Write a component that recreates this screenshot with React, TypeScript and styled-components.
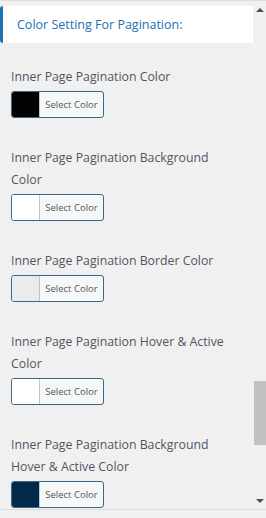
import React from "react";
import styled, { createGlobalStyle } from "styled-components";

const GlobalStyle = createGlobalStyle`
  html, body {
    margin: 0;
    padding: 0;
    background: #f0f0f1;
  }
  body {
    font-family: "Open Sans", "Noto Sans", sans-serif;
  }
`;

type ColorOption = {
  label: string;
  swatch: string;
};

const OPTIONS: ColorOption[] = [
  { label: "Inner Page Pagination Color", swatch: "#030303" },
  { label: "Inner Page Pagination Background Color", swatch: "#ffffff" },
  { label: "Inner Page Pagination Border Color", swatch: "#ebebeb" },
  { label: "Inner Page Pagination Hover & Active Color", swatch: "#ffffff" },
  { label: "Inner Page Pagination Background Hover & Active Color", swatch: "#012a4a" },
];

const Screen = styled.div`
  width: 266px;
  height: 518px;
  display: flex;
  flex-direction: column;
  border-top: 1px solid #e2ded6;
  box-sizing: border-box;
  overflow: hidden;
`;

const Frame = styled.div`
  height: 508px;
  display: flex;
  flex-direction: row;
  border-bottom: 1px solid #dcdcde;
  overflow: hidden;
`;

const Content = styled.div`
  width: 253px;
  display: flex;
  flex-direction: column;
  padding-top: 5px;
`;

const Heading = styled.div`
  height: 37px;
  background: #fff;
  border-left: 3px solid #2271b1;
  border-radius: 3px 0 0 3px;
  display: flex;
  align-items: center;
  padding-left: 14px;
  font-size: 12.5px;
  color: #2271b1;
`;

const Fields = styled.div`
  display: flex;
  flex-direction: column;
  gap: 29px;
  padding: 23px 0 0 11px;
`;

const Field = styled.div`
  display: flex;
  flex-direction: column;
  gap: 3px;
`;

const Label = styled.div`
  font-size: 12.3px;
  line-height: 22px;
  color: #50575e;
  width: 228px;
`;

const ColorButton = styled.button`
  width: 93px;
  height: 27px;
  padding: 0;
  display: flex;
  align-items: stretch;
  border: 1px solid #3b6787;
  border-radius: 3px;
  background: #f6f7f7;
  overflow: hidden;
  cursor: pointer;
  font-family: inherit;
`;

const Swatch = styled.span<{ $color: string }>`
  width: 27px;
  background: ${(p) => p.$color};
  border-right: 1px solid #c3c4c7;
`;

const ButtonText = styled.span`
  flex: 1;
  display: flex;
  align-items: center;
  justify-content: center;
  font-size: 9.5px;
  color: #50575e;
`;

const Scrollbar = styled.div`
  width: 13px;
  display: flex;
  flex-direction: column;
  align-items: center;
  background: #f1f1f1;
`;

const Arrow = styled.div<{ $down?: boolean }>`
  height: 17px;
  width: 13px;
  display: flex;
  align-items: center;
  justify-content: center;
  &::after {
    content: "";
    width: 0;
    height: 0;
    border-left: 4px solid transparent;
    border-right: 4px solid transparent;
    ${(p) =>
      p.$down ? "border-top: 4px solid #505050;" : "border-bottom: 4px solid #505050;"}
  }
`;

const Track = styled.div`
  flex: 1;
  width: 100%;
  display: flex;
  flex-direction: column;
`;

const Thumb = styled.div`
  margin-top: 363px;
  height: 64px;
  width: 12px;
  margin-left: 1px;
  background: #c1c1c1;
`;

export default function App() {
  return (
    <>
      <GlobalStyle />
      <Screen>
        <Frame>
          <Content>
            <Heading>Color Setting For Pagination:</Heading>
            <Fields>
              {OPTIONS.map((opt) => (
                <Field key={opt.label}>
                  <Label>{opt.label}</Label>
                  <ColorButton type="button">
                    <Swatch $color={opt.swatch} />
                    <ButtonText>Select Color</ButtonText>
                  </ColorButton>
                </Field>
              ))}
            </Fields>
          </Content>
          <Scrollbar>
            <Arrow />
            <Track>
              <Thumb />
            </Track>
            <Arrow $down />
          </Scrollbar>
        </Frame>
      </Screen>
    </>
  );
}
